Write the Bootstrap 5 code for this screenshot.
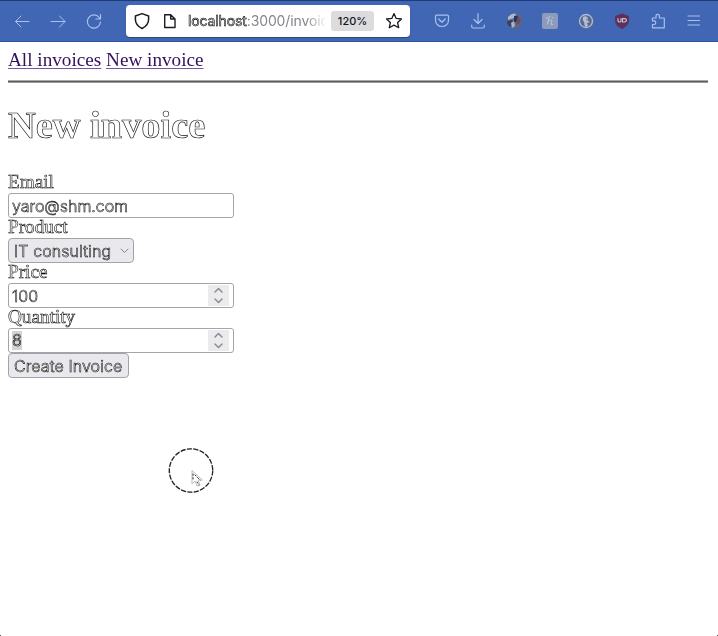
<!DOCTYPE html>
<html lang="en">
<head>
<meta charset="utf-8">
<meta name="viewport" content="width=device-width, initial-scale=1">
<title>New invoice</title>
<link href="https://cdn.jsdelivr.net/npm/bootstrap@5.3.0/dist/css/bootstrap.min.css" rel="stylesheet">
<style>
  html, body { height: 636px; overflow: hidden; }
  body { background: #fff; font-family: "Liberation Serif", "Times New Roman", serif; font-size: 19.2px; line-height: 20px; color: #000; }
  svg { display: block; flex: none; fill: none; stroke-linecap: round; stroke-linejoin: round; }
  .toolbar { height: 42px; background: #4066b4; border-top: 1px solid #203a78; border-bottom: 1px solid #2f539c; padding-left: 13px; stroke: #a9c0f0; }
  .nav-icons { width: 113px; gap: 18px; }
  .urlbar { width: 284px; height: 32px; border-radius: 4px; background: #fff; box-shadow: 0 1px 1px #2f4778; stroke: #1b1b22; padding-left: 7px; font: 14px/32px Inter, sans-serif; }
  .address { width: 138px; margin-left: 9px; letter-spacing: -.12px; color: #85858c; -webkit-mask-image: linear-gradient(90deg, #000 118px, transparent 139px); mask-image: linear-gradient(90deg, #000 118px, transparent 139px); }
  .hollow { color: #fff; -webkit-text-stroke: .55px #000; will-change: transform; }
  .address .hollow { color: #ddd; font-weight: 400; }
  .zoom-level { width: 43px; height: 20px; margin-left: 5px; border-radius: 3px; background: #dcdcdf; color: #15151a; font-size: 11px; line-height: 21px; font-weight: 500; }
  .extensions { gap: 18.1px; margin-left: 23px; }
  .page { padding: 0 10px 0 7.5px; }
  .links { height: 38px; padding-top: 8px; }
  .links a { color: #35115c; text-decoration-color: #79589a; text-decoration-thickness: 1px; text-underline-offset: 2px; }
  .links, .title, .caption { will-change: transform; }
  .rule { height: 3px; background: #5c5c5c; border-bottom: 1px solid #999; border-top: 1px solid #aaa; }
  h1.title { font-size: 38.4px; line-height: 44px; font-weight: 700; height: 69px; margin: 20px 0 0; color: #fff; -webkit-text-stroke: .65px #111; }
  form { padding-top: 1px; }
  .caption { height: 20px; line-height: 17px; color: #fff; -webkit-text-stroke: .55px #000; }
  .field { width: 226px; height: 25px; border: 1.5px solid #a5a5a8; border-radius: 3px; padding: 0 4px 0 3px; background: #fff; }
  .ui { font-family: Inter, sans-serif; font-size: 16px; line-height: 24px; font-weight: 300; }
  .mail { letter-spacing: -.05px; }
  .tinted { background: #e9e9ed; border-color: #a2a2aa; border-radius: 4px; letter-spacing: .09px; }
  .picker { width: 126px; padding: 0 4px 0 5px; }
  .submit { width: 121px; padding: 0 5px; }
  .spin { width: 21px; height: 21px; background: #ebebed; stroke: #8b8b94; stroke-width: 1.5; }
  .marked { background: #d4d4d5; line-height: 19px; color: #eee; }
  .pointer { left: 168px; top: 447px; }
  .corner { width: 1px; height: 1px; bottom: 0; background: #555; }
</style>
<script src="https://cdn.jsdelivr.net/npm/bootstrap@5.3.0/dist/js/bootstrap.bundle.min.js"></script>
</head>
<body class="position-relative">
<header class="toolbar d-flex align-items-center">
  <div class="nav-icons d-flex">
    <svg width="18" height="18"><path d="M16 9.500H2.500M8 4 2.500 9.500l5.500 5.500"/></svg>
    <svg width="18" height="18"><path d="M2 9.500h14M10.500 4l5.500 5.500-5.500 5.500"/></svg>
    <svg width="18" height="18"><path d="M14.500 6A6.600 6.600 0 1 0 15.500 10M15.500 2.500V7H11" stroke-width="1.200"/></svg>
  </div>
  <div class="urlbar d-flex align-items-center">
    <svg width="18" height="18" stroke-width="1.500"><path d="M9 1.600 15.600 4v3.500c0 4-3 7.200-6.600 9-3.600-1.800-6.600-5-6.600-9V4z"/></svg>
    <svg class="ms-2" width="20" height="18" stroke-width="1.400"><path d="M5.700 2.700h6L16 7v8.500H5.700zM11.700 2.700V7H16"/></svg>
    <div class="address text-nowrap"><span class="hollow">localhost</span>:3000/invoic</div>
    <div class="zoom-level text-center">120%</div>
    <svg class="ms-auto me-2" width="18" height="18" stroke-width="1.300"><path d="m10 1.600 2.200 4.800 5.300.6-3.900 3.500 1.100 5.200L10 13.100l-4.700 2.600 1.100-5.200L2.500 7l5.300-.6z"/></svg>
  </div>
  <div class="extensions d-flex align-items-center">
    <svg width="18" height="18"><path d="M3.500 3.200h11q1 0 1 1v4.300a6.500 6 0 0 1-13 0V4.200q0-1 1-1zM5.700 7 9 10.200 12.300 7" stroke-width="1.200"/></svg>
    <svg width="18" height="18"><path d="M9 1.500V11M5 7.500l4 4 4-4M2.700 13v1.500q0 1.500 1.500 1.500h9.600q1.500 0 1.500-1.500V13" stroke-width="1.200"/></svg>
    <svg width="18" height="18" stroke="none"><circle cx="9.500" cy="9" r="8" fill="#5d6684"/><path d="M3 5q4-5 8-3l-2 4-6 2z" fill="#a9b9cc"/><path d="M2 9l5-1 2 4-4 3q-3-2-3-6z" fill="#35426b"/><path d="m9 4 4 0-1 6-3 0z" fill="#263664"/><path d="m13 4 3 4-2 5-3-2z" fill="#744966"/><path d="m6 11 3-2 1 5-3 2z" fill="#aab2c7"/></svg>
    <svg width="18" height="18" stroke="none"><rect x="1" y="1" width="16" height="16" rx="2" fill="#8d9abc"/><path d="M8.500 4 6.500 12M7 9q4-2 4 0l-1 3q0 1.500 2 .5M11 5l1 1M5 6h2" stroke="#bac4dc"/></svg>
    <svg width="18" height="18"><circle cx="9.500" cy="9.500" r="7.500" fill="#596a90" stroke="none"/><circle cx="9" cy="9" r="6.500" stroke="#aebbd3" stroke-width="1.300"/><path d="M6 5q3-2 5 1v3l2 1-3 1 1 3-3 1-1-5q-2-2-1-5z" fill="#b2bed3" stroke="none"/><path d="M10 7v1" stroke="#50658d"/></svg>
    <svg width="18" height="18" stroke="none"><path d="M9 1.500 16 4v4q0 6-7 9-7-3-7-9V4z" fill="#5d3159"/><path d="M5 6.500v2.500q0 1 1.500 1T8 9V6.500M9.500 6.500V10q4 0 4-1.800t-4-1.700" stroke="#d4c2dd" stroke-width="1.100"/></svg>
    <svg width="18" height="18"><path d="M2.500 6H6V4a1.700 1.700 0 0 1 3.400 0v2h4.900v9.800H2.500V12.500H4a1.800 1.800 0 0 0 0-3.600H2.500z" stroke-width="1.200"/></svg>
    <svg width="18" height="18"><path d="M2 4h11.500M2 8.500h11.500M2 13h11.500" stroke-width="1.200"/></svg>
  </div>
</header>
<main class="page">
  <nav class="links"><a href="#">All invoices</a> <a href="#">New invoice</a></nav>
  <div class="rule"></div>
  <h1 class="title">New invoice</h1>
  <form class="d-flex flex-column align-items-start">
    <div class="caption">Email</div>
    <div class="field ui d-flex align-items-center"><span class="hollow mail">yaro@shm.com</span></div>
    <div class="caption">Product</div>
    <div class="field ui tinted picker d-flex align-items-center justify-content-between"><span class="hollow">IT consulting</span><svg width="9" height="8" stroke="#888"><path d="m1 2 3.500 3.500L8 2"/></svg></div>
    <div class="caption">Price</div>
    <div class="field ui d-flex align-items-center justify-content-between"><span class="hollow">100</span><svg class="spin" viewBox="0 0 21 21"><path d="m7 7 3.500-3.500L14 7M7 14l3.500 3.500L14 14"/></svg></div>
    <div class="caption">Quantity</div>
    <div class="field ui d-flex align-items-center justify-content-between"><span class="hollow marked">8</span><svg class="spin" viewBox="0 0 21 21"><path d="m7 7 3.500-3.500L14 7M7 14l3.500 3.500L14 14"/></svg></div>
    <div class="field ui tinted submit d-flex align-items-center text-nowrap"><span class="hollow">Create Invoice</span></div>
  </form>
</main>
<svg class="pointer position-absolute" width="46" height="46"><circle cx="23" cy="23.500" r="21.700" stroke="#ddd"/><circle cx="23" cy="23.500" r="21.700" stroke="#222" stroke-width="1.300" stroke-dasharray="5 1.500" stroke-linecap="butt"/><path d="M24 24v13l3-3 2 5 3-1-2-5h4z" fill="#fff" stroke="#bbb"/><path d="M25 27v7M27 28l5 5M29 35l2 3" stroke="#333" stroke-dasharray="1.500 2"/></svg>
<i class="corner position-absolute start-0"></i><i class="corner position-absolute end-0"></i>
</body>
</html>
